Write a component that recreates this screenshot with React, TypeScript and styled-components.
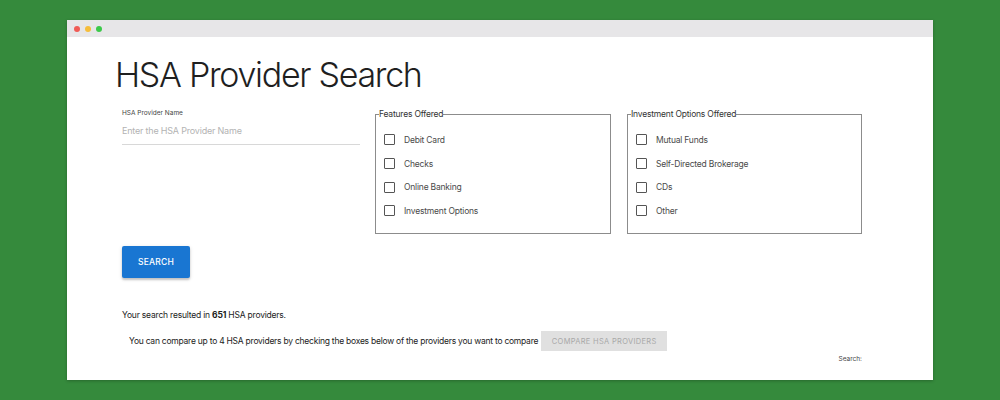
import React from "react";
import styled, { createGlobalStyle } from "styled-components";

const Global = createGlobalStyle`
  html, body { margin: 0; padding: 0; }
  body {
    background: #358a3c;
    font-family: Inter, "Noto Sans", sans-serif;
    color: #222;
  }
`;

const Stage = styled.div`
  width: 1000px;
  height: 400px;
  box-sizing: border-box;
  padding: 20px 67px;
`;

const Window = styled.div`
  width: 866px;
  height: 360px;
  background: #fff;
  display: flex;
  flex-direction: column;
  box-shadow: 0 1px 3px rgba(0, 0, 0, 0.25);
`;

const TitleBar = styled.div`
  height: 17px;
  background: #e7e6e8;
  display: flex;
  align-items: center;
  gap: 5px;
  padding-left: 7px;
`;

const Dot = styled.span<{ $c: string }>`
  width: 6px;
  height: 6px;
  border-radius: 50%;
  background: ${(p) => p.$c};
`;

const Content = styled.div`
  padding: 17px 71px 0 48px;
  display: flex;
  flex-direction: column;
`;

const Title = styled.h1`
  margin: 0;
  font-size: 34px;
  line-height: 42px;
  font-weight: 300;
  color: #1f1f1f;
  letter-spacing: -1.3px;
`;

const Body = styled.div`
  padding-left: 7px;
  display: flex;
  flex-direction: column;
  letter-spacing: -0.2px;
`;

const FormGrid = styled.div`
  margin-top: 13px;
  display: grid;
  grid-template-columns: 238px 236px 236px;
  column-gap: 15px;
  align-items: start;
  & > :nth-child(3) { margin-left: 1px; }
`;

const Field = styled.div`
  display: flex;
  flex-direction: column;
`;

const FieldLabel = styled.label`
  font-size: 6.5px;
  color: #444;
  line-height: 8px;
  letter-spacing: 0;
`;

const TextInput = styled.input`
  margin-top: 8px;
  border: none;
  border-bottom: 1px solid #d8d8d8;
  outline: none;
  padding: 0 0 7px 0;
  font-family: inherit;
  font-size: 9px;
  line-height: 12px;
  letter-spacing: -0.2px;
  color: #333;
  &::placeholder { color: #b3b3b3; }
`;

const Fieldset = styled.fieldset`
  margin: 0;
  padding: 9px 8px 11px 8px;
  border: 1px solid #8c8c8c;
  height: 125px;
  box-sizing: border-box;
  min-width: 0;
`;

const Legend = styled.legend`
  font-size: 8.5px;
  line-height: 10px;
  padding: 0;
  margin-left: -5px;
  color: #333;
`;

const CheckRow = styled.label`
  display: flex;
  align-items: center;
  height: 23.7px;
  gap: 9px;
  font-size: 8.5px;
  color: #4a4a4a;
`;

const Box = styled.span`
  width: 9px;
  height: 9px;
  border: 1.5px solid #555;
  border-radius: 1px;
  flex: none;
`;

const SearchButton = styled.button`
  margin-top: 12px;
  width: 68px;
  height: 32px;
  border: none;
  border-radius: 2px;
  background: #1976d2;
  color: #fff;
  font-family: inherit;
  font-size: 8.5px;
  font-weight: 500;
  letter-spacing: 0.2px;
  box-shadow: 0 2px 2px rgba(0, 0, 0, 0.18), 0 1px 4px rgba(0, 0, 0, 0.12);
`;

const Result = styled.p`
  margin: 31px 0 0 0;
  font-size: 8.5px;
  line-height: 12px;
  color: #222;
  b { font-weight: 700; }
`;

const CompareRow = styled.div`
  margin-top: 10px;
  padding-left: 7px;
  display: flex;
  align-items: center;
  gap: 3px;
  font-size: 8.5px;
  letter-spacing: -0.24px;
  color: #222;
`;

const CompareButton = styled.button`
  width: 126px;
  height: 20px;
  border: none;
  background: #e0e0e0;
  color: #a8a8a8;
  font-family: inherit;
  font-size: 7.5px;
  letter-spacing: 0.3px;
  padding: 0;
`;

const SearchLabel = styled.div`
  margin-top: 4px;
  align-self: flex-end;
  font-size: 6.5px;
  letter-spacing: 0;
  color: #444;
`;

const features = ["Debit Card", "Checks", "Online Banking", "Investment Options"];
const investments = ["Mutual Funds", "Self-Directed Brokerage", "CDs", "Other"];

function Group({ legend, items }: { legend: string; items: string[] }) {
  return (
    <Fieldset>
      <Legend>{legend}</Legend>
      {items.map((t) => (
        <CheckRow key={t}>
          <Box />
          {t}
        </CheckRow>
      ))}
    </Fieldset>
  );
}

export default function App() {
  return (
    <>
      <Global />
      <Stage>
        <Window>
          <TitleBar>
            <Dot $c="#f05b55" />
            <Dot $c="#f6bd3b" />
            <Dot $c="#3cc94a" />
          </TitleBar>
          <Content>
            <Title>HSA Provider Search</Title>
            <Body>
              <FormGrid>
                <Field>
                  <FieldLabel>HSA Provider Name</FieldLabel>
                  <TextInput placeholder="Enter the HSA Provider Name" />
                </Field>
                <Group legend="Features Offered" items={features} />
                <Group legend="Investment Options Offered" items={investments} />
              </FormGrid>
              <div>
                <SearchButton>SEARCH</SearchButton>
              </div>
              <Result>
                Your search resulted in <b>651</b> HSA providers.
              </Result>
              <CompareRow>
                You can compare up to 4 HSA providers by checking the boxes below of the providers you want to compare
                <CompareButton>COMPARE HSA PROVIDERS</CompareButton>
              </CompareRow>
              <SearchLabel>Search:</SearchLabel>
            </Body>
          </Content>
        </Window>
      </Stage>
    </>
  );
}
